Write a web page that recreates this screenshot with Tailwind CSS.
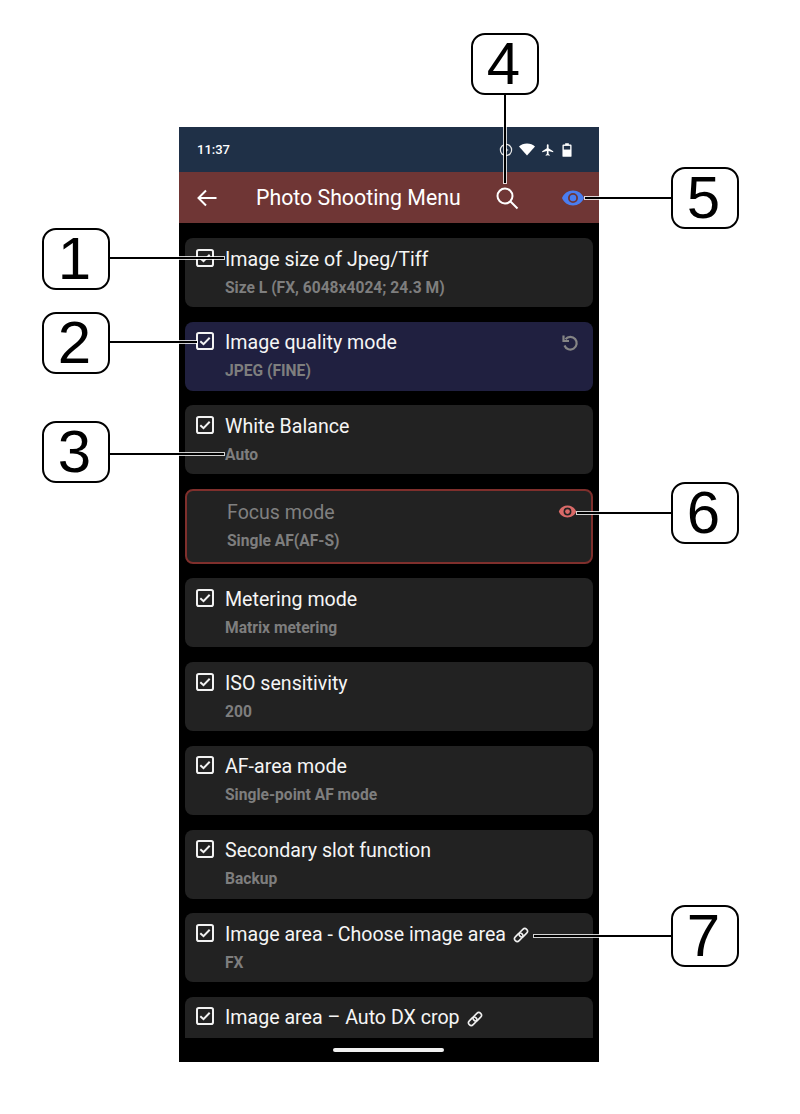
<!DOCTYPE html>
<html><head><meta charset="utf-8">
<script src="https://cdn.jsdelivr.net/npm/@tailwindcss/browser@4"></script>
</head>
<body class="bg-white">
<div class="relative w-[800px] h-[1114px] overflow-hidden bg-white pt-[127px] pl-[179px] font-['Roboto',sans-serif]">
  <!-- phone -->
  <div class="w-[420px] h-[935px] bg-black flex flex-col relative overflow-hidden">
    <div class="h-[45px] shrink-0 bg-[#1f3047] flex items-center justify-between pl-[18px] pr-[26px] text-white">
      <span class="text-[13px] font-medium leading-none">11:37</span>
      <div class="flex items-center gap-[6px] mr-[1px]">
        <svg class="w-[14px] h-[14px]" viewBox="0 0 14 14" fill="none" stroke="#e8e8e8" stroke-width="1.2"><circle cx="7" cy="7" r="5.600"/><path d="M4.800 7h4.400M7 5v4"/></svg>
        <svg class="w-[16px] h-[13px]" viewBox="0 0 16 13" fill="#fff"><path d="M0 3.400C2 1.400 4.800.4 8 .4s6 1 8 3L8 12.600z"/></svg>
        <svg class="w-[14px] h-[14px]" viewBox="0 0 24 24" fill="#fff"><path d="M21 16v-2l-8-5V3.500a1.500 1.500 0 0 0-3 0V9l-8 5v2l8-2.500V19l-2 1.500V22l3.500-1 3.500 1v-1.500L13 19v-5.500z"/></svg>
        <svg class="ml-[1px] w-[10px] h-[14px]" viewBox="0 0 11 15" fill="#fff"><path d="M3.500 0h4v1.500H9.500a1 1 0 0 1 1 1V14a1 1 0 0 1-1 1h-8a1 1 0 0 1-1-1V2.500a1 1 0 0 1 1-1h2z"/><rect x="2" y="3" width="7" height="4" fill="#1f3047"/></svg>
      </div>
    </div>
    <div class="h-[51px] shrink-0 bg-[#6f3635] flex items-center relative text-white">
      <svg class="ml-[17px] w-[22px] h-[22px]" viewBox="0 0 22 22" fill="none" stroke="#fff" stroke-width="2"><path d="M20.500 11H2.500M10 3.500 2.500 11l7.500 7.500"/></svg>
      <span class="ml-[38px] mt-[1px] text-[21.300px] leading-none whitespace-nowrap">Photo Shooting Menu</span>
      <svg class="absolute left-[316px] top-[14px] w-[24px] h-[24px]" viewBox="0 0 24 24" fill="none" stroke="#fff" stroke-width="2"><circle cx="10" cy="10" r="7.500"/><path d="m15.500 15.500 7 7"/></svg>
      <svg class="absolute left-[382px] top-[14px] w-[24px] h-[24px]" viewBox="0 0 24 24" fill="#4a7df0" fill-rule="evenodd"><path d="M12 4.500C7 4.500 2.700 7.600 1 12c1.700 4.400 6 7.500 11 7.500s9.300-3.100 11-7.500c-1.700-4.400-6-7.500-11-7.500zm0 12.500a5 5 0 1 1 0-10 5 5 0 0 1 0 10z"/><path d="M12 8.800a3.200 3.200 0 1 0 0 6.400 3.200 3.200 0 0 0 0-6.400z"/></svg>
    </div>
    <div class="flex-1 min-h-0 overflow-hidden px-[6px] pt-[15px] flex flex-col gap-[14.700px]">
      <div class="h-[69px] shrink-0 rounded-[8px] bg-[#222222] flex pl-[11px] pr-[14px] pt-[10.500px]">
        <svg class="w-[18px] h-[18px] shrink-0" viewBox="0 0 18 18" fill="none" stroke="#f2f2f2" stroke-width="2"><rect x="1" y="1" width="16" height="16" rx="1.800"/><path d="m4.300 9.200 3.200 3 6.200-6.500"/></svg>
        <div class="ml-[11px] flex-1"><div class="text-[#f5f5f5] text-[19.600px] leading-[22px]">Image size of Jpeg/Tiff</div><div class="mt-[8px] text-[#7e7e7e] text-[15.600px] leading-[18px] font-bold">Size L (FX, 6048x4024; 24.3 M)</div></div>
      </div>
      <div class="h-[69px] shrink-0 rounded-[8px] bg-[#202040] flex pl-[11px] pr-[14px] pt-[10.500px]">
        <svg class="w-[18px] h-[18px] shrink-0" viewBox="0 0 18 18" fill="none" stroke="#f2f2f2" stroke-width="2"><rect x="1" y="1" width="16" height="16" rx="1.800"/><path d="m4.300 9.200 3.200 3 6.200-6.500"/></svg>
        <div class="ml-[11px] flex-1"><div class="text-[#f5f5f5] text-[19.600px] leading-[22px]">Image quality mode</div><div class="mt-[8px] text-[#7e7e7e] text-[15.600px] leading-[18px] font-bold">JPEG (FINE)</div></div>
        <svg class="w-[18px] h-[18px] mt-[2px] shrink-0" viewBox="0 0 18 18" fill="none" stroke="#858585" stroke-width="2.200"><path d="M4.500 5.200a6.300 6.300 0 1 1-1 6.300"/><path d="M2.500 1.500v5.500H8"/></svg>
      </div>
      <div class="h-[69px] shrink-0 rounded-[8px] bg-[#222222] flex pl-[11px] pr-[14px] pt-[10.500px]">
        <svg class="w-[18px] h-[18px] shrink-0" viewBox="0 0 18 18" fill="none" stroke="#f2f2f2" stroke-width="2"><rect x="1" y="1" width="16" height="16" rx="1.800"/><path d="m4.300 9.200 3.200 3 6.200-6.500"/></svg>
        <div class="ml-[11px] flex-1"><div class="text-[#f5f5f5] text-[19.600px] leading-[22px]">White Balance</div><div class="mt-[8px] text-[#7e7e7e] text-[15.600px] leading-[18px] font-bold">Auto</div></div>
      </div>
      <div class="h-[74.700px] shrink-0 rounded-[8px] bg-[#222222] border-2 border-[#7f2f2c] flex justify-between pl-[40px] pr-[14px] pt-[11px]">
        <div><div class="text-[#808080] text-[19.600px] leading-[22px]">Focus mode</div><div class="mt-[8px] text-[#7e7e7e] text-[15.600px] leading-[18px] font-bold">Single AF(AF-S)</div></div>
        <svg class="w-[19px] h-[19px] shrink-0" viewBox="0 0 24 24" fill="#d96a68" fill-rule="evenodd"><path d="M12 4.500C7 4.500 2.700 7.600 1 12c1.700 4.400 6 7.500 11 7.500s9.300-3.100 11-7.500c-1.700-4.400-6-7.500-11-7.500zm0 12.500a5 5 0 1 1 0-10 5 5 0 0 1 0 10z"/><path d="M12 9a3 3 0 1 0 0 6 3 3 0 0 0 0-6z"/></svg>
      </div>
      <div class="h-[69px] shrink-0 rounded-[8px] bg-[#222222] flex pl-[11px] pr-[14px] pt-[10.500px]">
        <svg class="w-[18px] h-[18px] shrink-0" viewBox="0 0 18 18" fill="none" stroke="#f2f2f2" stroke-width="2"><rect x="1" y="1" width="16" height="16" rx="1.800"/><path d="m4.300 9.200 3.200 3 6.200-6.500"/></svg>
        <div class="ml-[11px] flex-1"><div class="text-[#f5f5f5] text-[19.600px] leading-[22px]">Metering mode</div><div class="mt-[8px] text-[#7e7e7e] text-[15.600px] leading-[18px] font-bold">Matrix metering</div></div>
      </div>
      <div class="h-[69px] shrink-0 rounded-[8px] bg-[#222222] flex pl-[11px] pr-[14px] pt-[10.500px]">
        <svg class="w-[18px] h-[18px] shrink-0" viewBox="0 0 18 18" fill="none" stroke="#f2f2f2" stroke-width="2"><rect x="1" y="1" width="16" height="16" rx="1.800"/><path d="m4.300 9.200 3.200 3 6.200-6.500"/></svg>
        <div class="ml-[11px] flex-1"><div class="text-[#f5f5f5] text-[19.600px] leading-[22px]">ISO sensitivity</div><div class="mt-[8px] text-[#7e7e7e] text-[15.600px] leading-[18px] font-bold">200</div></div>
      </div>
      <div class="h-[69px] shrink-0 rounded-[8px] bg-[#222222] flex pl-[11px] pr-[14px] pt-[10.500px]">
        <svg class="w-[18px] h-[18px] shrink-0" viewBox="0 0 18 18" fill="none" stroke="#f2f2f2" stroke-width="2"><rect x="1" y="1" width="16" height="16" rx="1.800"/><path d="m4.300 9.200 3.200 3 6.200-6.500"/></svg>
        <div class="ml-[11px] flex-1"><div class="text-[#f5f5f5] text-[19.600px] leading-[22px]">AF-area mode</div><div class="mt-[8px] text-[#7e7e7e] text-[15.600px] leading-[18px] font-bold">Single-point AF mode</div></div>
      </div>
      <div class="h-[69px] shrink-0 rounded-[8px] bg-[#222222] flex pl-[11px] pr-[14px] pt-[10.500px]">
        <svg class="w-[18px] h-[18px] shrink-0" viewBox="0 0 18 18" fill="none" stroke="#f2f2f2" stroke-width="2"><rect x="1" y="1" width="16" height="16" rx="1.800"/><path d="m4.300 9.200 3.200 3 6.200-6.500"/></svg>
        <div class="ml-[11px] flex-1"><div class="text-[#f5f5f5] text-[19.600px] leading-[22px]">Secondary slot function</div><div class="mt-[8px] text-[#7e7e7e] text-[15.600px] leading-[18px] font-bold">Backup</div></div>
      </div>
      <div class="h-[69px] shrink-0 rounded-[8px] bg-[#222222] flex pl-[11px] pr-[14px] pt-[10.500px]">
        <svg class="w-[18px] h-[18px] shrink-0" viewBox="0 0 18 18" fill="none" stroke="#f2f2f2" stroke-width="2"><rect x="1" y="1" width="16" height="16" rx="1.800"/><path d="m4.300 9.200 3.200 3 6.200-6.500"/></svg>
        <div class="ml-[11px] flex-1"><div class="flex items-center gap-[7px] text-[#f5f5f5] text-[19.600px] leading-[22px]">Image area - Choose image area
          <svg class="w-[16px] h-[16px] mt-[1px]" viewBox="0 0 16 16" fill="none" stroke="#f0f0f0" stroke-width="1.600"><g transform="rotate(-45 8 8)"><rect x="0" y="5.300" width="9.500" height="5.400" rx="2.700"/><rect x="6.500" y="5.300" width="9.500" height="5.400" rx="2.700"/></g></svg></div>
          <div class="mt-[8px] text-[#7e7e7e] text-[15.600px] leading-[18px] font-bold">FX</div></div>
      </div>
      <div class="h-[69px] shrink-0 rounded-[8px] bg-[#222222] flex pl-[11px] pr-[14px] pt-[10.500px]">
        <svg class="w-[18px] h-[18px] shrink-0" viewBox="0 0 18 18" fill="none" stroke="#f2f2f2" stroke-width="2"><rect x="1" y="1" width="16" height="16" rx="1.800"/><path d="m4.300 9.200 3.200 3 6.200-6.500"/></svg>
        <div class="ml-[11px] flex-1"><div class="flex items-center gap-[7px] text-[#f5f5f5] text-[19.600px] leading-[22px]">Image area – Auto DX crop
          <svg class="w-[16px] h-[16px] mt-[1px]" viewBox="0 0 16 16" fill="none" stroke="#f0f0f0" stroke-width="1.600"><g transform="rotate(-45 8 8)"><rect x="0" y="5.300" width="9.500" height="5.400" rx="2.700"/><rect x="6.500" y="5.300" width="9.500" height="5.400" rx="2.700"/></g></svg></div></div>
      </div>
    </div>
    <!-- bottom nav strip over list -->
    <div class="absolute left-0 right-0 bottom-0 h-[24px] bg-black flex items-center justify-center">
      <div class="w-[111px] h-[4px] rounded-full bg-[#f0f0f0] -ml-[1px]"></div>
    </div>
  </div>

  <!-- callout leader lines -->
  <div class="absolute left-[110px] top-[257px] w-[114px] h-[2px] bg-black outline outline-1 outline-white/80"></div>
  <div class="absolute left-[110px] top-[341px] w-[87px] h-[2px] bg-black outline outline-1 outline-white/80"></div>
  <div class="absolute left-[110px] top-[453px] w-[114px] h-[2px] bg-black outline outline-1 outline-white/80"></div>
  <div class="absolute left-[504px] top-[95px] w-[2px] h-[88px] bg-black outline outline-1 outline-white/80"></div>
  <div class="absolute left-[585px] top-[197px] w-[87px] h-[2px] bg-black outline outline-1 outline-white/80"></div>
  <div class="absolute left-[577px] top-[512px] w-[95px] h-[2px] bg-black outline outline-1 outline-white/80"></div>
  <div class="absolute left-[534px] top-[935px] w-[138px] h-[2px] bg-black outline outline-1 outline-white/80"></div>

  <!-- callout boxes -->
  <div class="absolute left-[42px] top-[228px] w-[68px] h-[62px] rounded-[14px] border-[2.500px] border-black bg-white flex items-center justify-center pr-[3px] font-['Liberation_Sans',sans-serif] text-[60px] leading-none text-black">1</div>
  <div class="absolute left-[42px] top-[312px] w-[68px] h-[62px] rounded-[14px] border-[2.500px] border-black bg-white flex items-center justify-center pr-[3px] font-['Liberation_Sans',sans-serif] text-[60px] leading-none text-black">2</div>
  <div class="absolute left-[42px] top-[421px] w-[68px] h-[62px] rounded-[14px] border-[2.500px] border-black bg-white flex items-center justify-center pr-[3px] font-['Liberation_Sans',sans-serif] text-[60px] leading-none text-black">3</div>
  <div class="absolute left-[471px] top-[33px] w-[68px] h-[62px] rounded-[14px] border-[2.500px] border-black bg-white flex items-center justify-center pr-[3px] font-['Liberation_Sans',sans-serif] text-[60px] leading-none text-black">4</div>
  <div class="absolute left-[671px] top-[167px] w-[68px] h-[62px] rounded-[14px] border-[2.500px] border-black bg-white flex items-center justify-center pr-[3px] font-['Liberation_Sans',sans-serif] text-[60px] leading-none text-black">5</div>
  <div class="absolute left-[671px] top-[482px] w-[68px] h-[62px] rounded-[14px] border-[2.500px] border-black bg-white flex items-center justify-center pr-[3px] font-['Liberation_Sans',sans-serif] text-[60px] leading-none text-black">6</div>
  <div class="absolute left-[671px] top-[905px] w-[68px] h-[62px] rounded-[14px] border-[2.500px] border-black bg-white flex items-center justify-center pr-[3px] font-['Liberation_Sans',sans-serif] text-[60px] leading-none text-black">7</div>
</div>
</body></html>
